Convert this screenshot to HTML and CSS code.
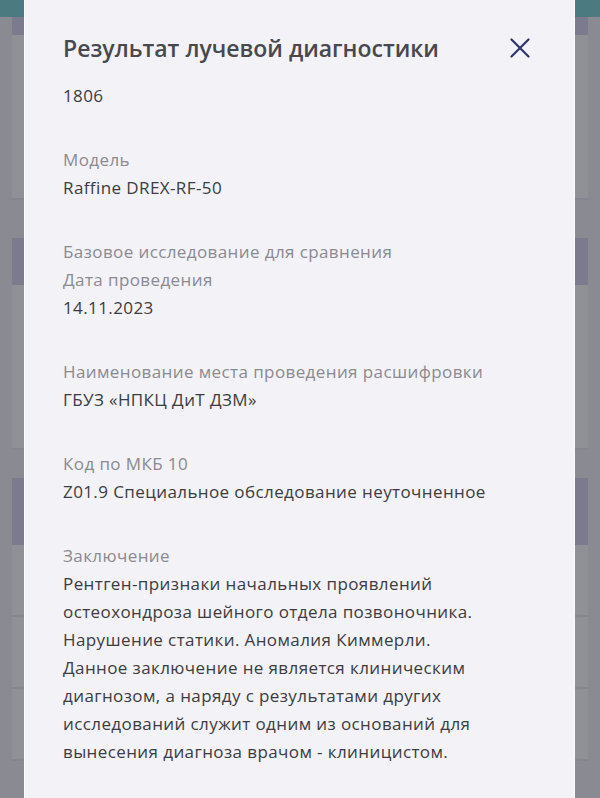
FILE: index.html
```html
<!DOCTYPE html>
<html lang="ru">
<head>
  <meta charset="UTF-8">
  <meta name="viewport" content="width=device-width, initial-scale=1">
  <title>Результат лучевой диагностики</title>
  <link rel="stylesheet" href="styles.css">
</head>
<body>
  <div class="page">
    <div class="topbar"></div>
    <div class="cards">
      <div class="card">
        <div class="card-head head-1"></div>
        <div class="card-body body-1"></div>
      </div>
      <div class="card">
        <div class="card-head head-2"></div>
        <div class="card-body body-2"></div>
      </div>
      <div class="card">
        <div class="card-head head-3"></div>
        <div class="card-row"></div>
        <div class="card-row"></div>
        <div class="card-row"></div>
      </div>
    </div>
  </div>

  <div class="modal">
    <div class="modal-header">
      <h2 class="modal-title">Результат лучевой диагностики</h2>
      <button class="close-btn" aria-label="Закрыть">
        <svg width="20" height="20" viewBox="0 0 20 20">
          <path d="M1.5 1.5 L18.5 18.5 M18.5 1.5 L1.5 18.5" stroke="#2e3566" stroke-width="2.2" stroke-linecap="round" fill="none"/>
        </svg>
      </button>
    </div>
    <div class="modal-id">1806</div>

    <div class="field">
      <div class="label">Модель</div>
      <div class="value">Raffine DREX-RF-50</div>
    </div>

    <div class="field">
      <div class="label">Базовое исследование для сравнения</div>
      <div class="label">Дата проведения</div>
      <div class="value">14.11.2023</div>
    </div>

    <div class="field">
      <div class="label">Наименование места проведения расшифровки</div>
      <div class="value">ГБУЗ «НПКЦ ДиТ ДЗМ»</div>
    </div>

    <div class="field">
      <div class="label">Код по МКБ 10</div>
      <div class="value">Z01.9 Специальное обследование неуточненное</div>
    </div>

    <div class="field">
      <div class="label">Заключение</div>
      <div class="value">Рентген-признаки начальных проявлений остеохондроза шейного отдела позвоночника. Нарушение статики. Аномалия Киммерли.<br>Данное заключение не является клиническим диагнозом, а наряду с результатами других исследований служит одним из оснований для вынесения диагноза врачом - клиницистом.</div>
    </div>
  </div>
</body>
</html>
```

FILE: styles.css
```css
body {
  margin: 0;
  padding: 0;
  font-family: "Open Sans", "Noto Sans", sans-serif;
  background-color: #8a8a93;
  overflow: hidden;
}

.page {
  height: 798px;
}

.topbar {
  height: 17px;
  background-color: #4b7a80;
}

.cards {
  margin: 0 12px;
  display: flex;
  flex-direction: column;
}

.card {
  display: flex;
  flex-direction: column;
}

.card-head {
  background-color: #7c7b8e;
}

.card-body,
.card-row {
  background-color: #909097;
  border-bottom: 2px solid #858590;
}

.head-1 { height: 18px; }
.body-1 { height: 163px; }

.head-2 { height: 47px; margin-top: 38px; }
.body-2 { height: 163px; }

.head-3 { height: 67px; margin-top: 28px; }
.card-row { height: 70px; }

.modal {
  position: absolute;
  top: 0;
  left: 24px;
  width: 473px;
  height: 798px;
  padding: 34px 38px 0;
  background-color: #f2f2f7;
  border-left: 1px solid #fbfbfd;
  border-right: 1px solid #fbfbfd;
  box-sizing: content-box;
  color: #3c3c41;
}

.modal-header {
  display: flex;
  justify-content: space-between;
  align-items: center;
}

.modal-title {
  margin: 0;
  font-size: 23px;
  line-height: 28px;
  font-weight: 600;
  color: #48484d;
}

.close-btn {
  background: none;
  border: none;
  padding: 0;
  margin-right: 6px;
  width: 20px;
  height: 20px;
  cursor: pointer;
}

.close-btn svg {
  display: block;
}

.modal-id {
  margin-top: 20px;
  font-size: 17px;
  line-height: 28px;
  letter-spacing: 0.4px;
}

.field {
  margin-top: 36px;
  font-size: 17px;
  line-height: 28px;
  letter-spacing: 0.4px;
}

.label {
  color: #8a8a90;
}

.value {
  color: #3c3c41;
}
```
